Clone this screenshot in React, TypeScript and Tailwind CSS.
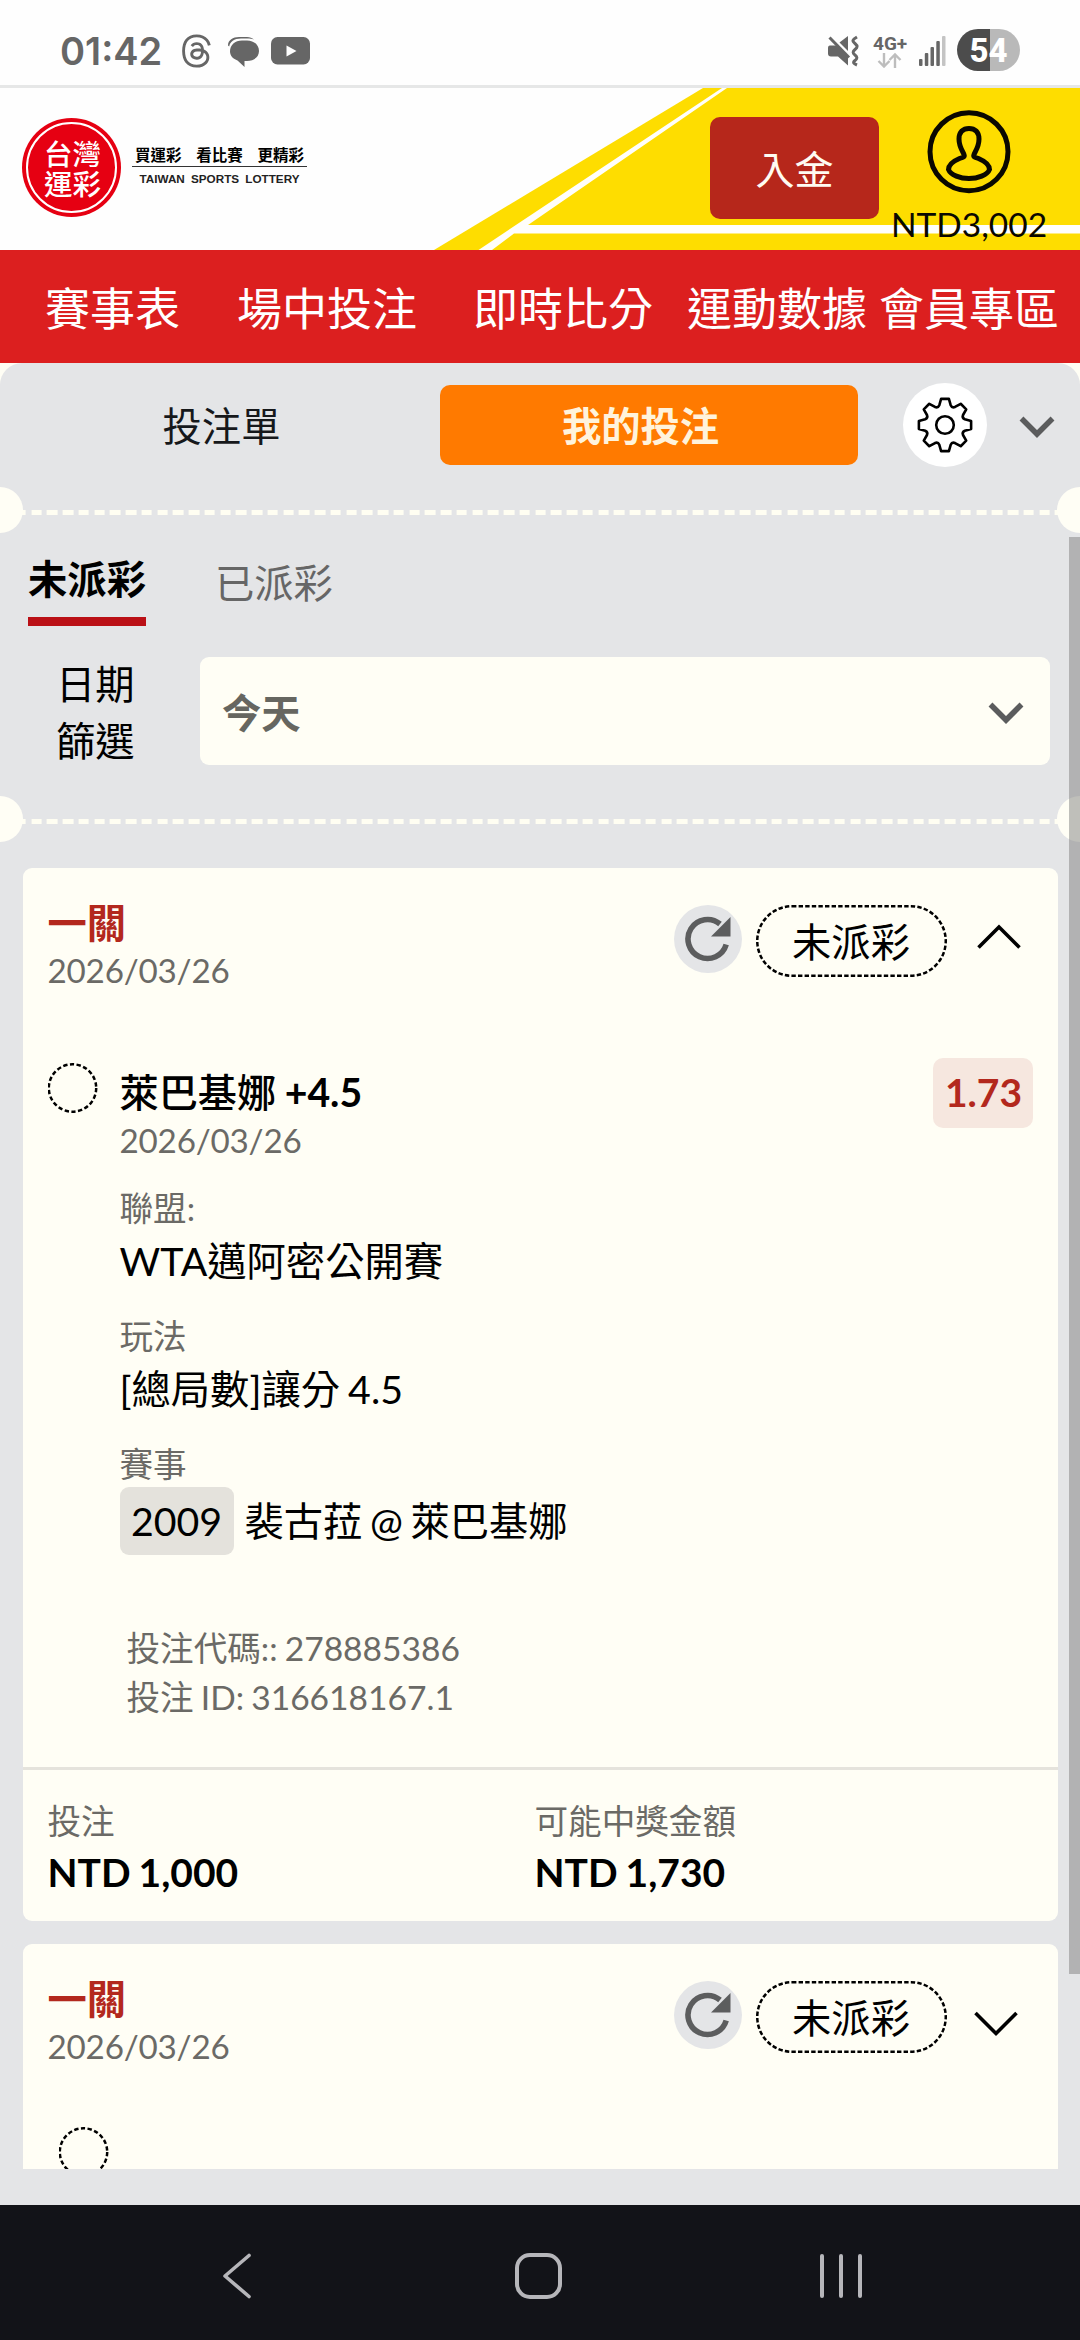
import React from 'react';
import { FaThreads } from 'react-icons/fa6';

interface Bet {
  id: string;
  title: string;
  date: string;
  status: string;
  expanded: boolean;
}

const navItems = [
  { label: '賽事表', gap: 'ml-[45px]' },
  { label: '場中投注', gap: 'ml-[57px]' },
  { label: '即時比分', gap: 'ml-[56px]' },
  { label: '運動數據', gap: 'ml-[34px]' },
  { label: '會員專區', gap: 'ml-[12px]' },
];

const bets: Bet[] = [
  { id: '1', title: '一關', date: '2026/03/26', status: '未派彩', expanded: true },
  { id: '2', title: '一關', date: '2026/03/26', status: '未派彩', expanded: false },
];

// Eight-tooth gear outline around (0, 0)
const gearPath = () => {
  const at = (r: number, deg: number) => {
    const a = (deg * Math.PI) / 180;
    return `${(r * Math.sin(a)).toFixed(2)} ${(-r * Math.cos(a)).toFixed(2)}`;
  };
  let d = '';
  for (let i = 0; i < 8; i++) {
    const a = i * 45;
    d += `${i === 0 ? 'M' : 'L'}${at(26.4, a - 8.5)} L${at(26.4, a + 8.5)} `;
    d += `L${at(20.6, a + 16)} Q${at(18.2, a + 22.5)} ${at(20.6, a + 29)} `;
  }
  return d + 'Z';
};

function StatusBar() {
  return (
    <div className="flex h-[88px] items-start border-b-[3px] border-[#e6e7e7] bg-[#fefefe] text-[#666]">
      <span className="ml-[60px] mt-[27px] w-[121px] font-['Inter',sans-serif] text-[38px] leading-[48px] font-semibold">
        01:42
      </span>
      <FaThreads className="mt-[33px] h-[36px] w-[31px]" />
      <svg className="mt-[36px] ml-[16px] h-[31px] w-[31px]" viewBox="0 0 31 31" fill="currentColor">
        <path d="M0 9.500C0 4 5 1 11 1h8c3 0 5 1 7 2.500C23 2.500 21 2.600 19 2.600h-6C6 2.600 2 6 1.200 10.500z" />
        <path d="M14 4.500h5C26 4.500 31 9 31 15s-5 10-12 10h-2.500L16.500 31 9.500 24.500C5.500 23 2 20 2 15.500 2 9 7 4.500 14 4.500z" />
      </svg>
      <svg className="mt-[37px] ml-[12px] h-[28px] w-[40px]" viewBox="0 0 40 28">
        <rect width="39" height="27.500" rx="6.500" fill="currentColor" />
        <path d="M15.500 8.500 25.500 14l-10 5.500z" fill="#fefefe" />
      </svg>
      <svg className="mt-[35px] ml-[517px] h-[32px] w-[31px]" viewBox="0 0 31 32">
        <path d="M1.500 2.500 21 22.500" stroke="currentColor" strokeWidth="3" />
        <path d="M20 1v15L11.500 7.500z" fill="currentColor" />
        <path d="M2 10.500h6.500L20 22v8.500L10 21.500H3c-2 0-3-1-3-3v-5c0-2 .5-3 2-3z" fill="currentColor" />
        <path d="M29 2c-5 3-5 4-2 6.500s2.500 4 0 6-2.500 3.500 0 5.500 2.500 3.500 0 5.500-1.500 3 2 4.500" fill="none" stroke="currentColor" strokeWidth="3" />
      </svg>
      <div className="mt-[35px] ml-[14px] flex w-[34px] flex-col">
        <span className="font-['Roboto',sans-serif] text-[19px] leading-[17px] font-bold">4G+</span>
        <svg className="ml-[4px] h-[16px] w-[25px]" viewBox="0 0 25 16" fill="none" stroke="#bdbdbd" strokeWidth="2.400">
          <path d="M7 1v13M1.500 9 7 14.500 12.500 9M18 16V3M12.500 8 18 2.500 23.500 8" />
        </svg>
      </div>
      <svg className="mt-[36px] ml-[12px] h-[30px] w-[28px]" viewBox="0 0 28 30" fill="currentColor">
        <rect x="0" y="23" width="3.500" height="7" rx="1" />
        <rect x="5.800" y="17" width="3.500" height="13" rx="1" />
        <rect x="11.500" y="11" width="3.500" height="19" rx="1" />
        <rect x="17.300" y="5" width="3.500" height="25" rx="1" />
        <rect x="23" y="0" width="3.500" height="30" rx="1" fill="#c4c4c4" />
      </svg>
      <div className="mt-[29px] ml-[10px] h-[42px] w-[63px] overflow-hidden rounded-full bg-[linear-gradient(90deg,#4c4c4c_53%,#b9b9b9_53%)] text-center font-['Roboto',sans-serif] text-[33px] leading-[43px] font-extrabold text-white">
        54
      </div>
    </div>
  );
}

function Header() {
  return (
    <div className="relative h-[162px] bg-[#fefefe]">
      <svg className="absolute inset-0 h-[162px] w-[1080px]" viewBox="0 0 1080 162">
        <path d="M434 162 703 0h377v162z" fill="#fedd00" />
        <path d="M478.500 162 722 0h5L528 137h552v8.500H514L492 162z" fill="#fffefb" />
      </svg>
      <div className="relative flex">
        <div className="mt-[30px] ml-[22px] flex h-[99px] w-[99px] rounded-full bg-[#e60012] p-[4px]">
          <div className="grid flex-1 place-content-center rounded-full border-2 border-white pl-[2px] font-['Noto_Sans_CJK_TC',sans-serif] text-[28.500px] leading-[30px] font-medium text-white">
            <span>台灣</span>
            <span>運彩</span>
          </div>
        </div>
        <div className="mt-[54px] ml-[11px] w-[175px]">
          <div className="flex h-[25px] justify-between border-b border-[#333] px-[3px] font-['Noto_Sans_CJK_TC',sans-serif] text-[15.500px] leading-[24px] font-bold text-black">
            <span>買運彩</span>
            <span>看比賽</span>
            <span>更精彩</span>
          </div>
          <div className="mt-[3px] text-center font-['Liberation_Sans',sans-serif] text-[11.700px] leading-[18px] font-bold whitespace-nowrap text-[#222] [word-spacing:3px]">
            TAIWAN SPORTS LOTTERY
          </div>
        </div>
        <button className="mt-[29px] ml-[403px] h-[102px] w-[169px] rounded-[10px] bg-[#b6271b] pt-[2px] text-[39px] text-[#fffbf2]">
          入金
        </button>
        <div className="mt-[22px] ml-[9px] flex w-[162px] flex-col items-center">
          <svg className="h-[84px] w-[84px]" viewBox="928 110 84 84" fill="none" stroke="#0a0800" strokeWidth="5">
            <ellipse cx="970" cy="151.700" rx="39" ry="39" />
            <path d="M963.500 157.500C969 155.500 960 151 960 139c0-7 4-10.500 10-10.500s10 3.500 10 10.500c0 12-9 16.500-3.500 18.500l3 1c7 3 11 6 11 11-2 5.500-12 9-20.500 9s-18.500-3.500-20.500-9c0-5 4-8 11-11z" />
          </svg>
          <span className="mt-[8px] text-[33.500px] leading-[44px] text-[#0a0800]">NTD3,002</span>
        </div>
      </div>
    </div>
  );
}

function Perforation() {
  return (
    <div className="relative h-[46px] w-[1080px] overflow-hidden">
      <div className="mt-[23px] h-[5px] bg-[repeating-linear-gradient(90deg,#fffef2_0_10.400px,transparent_10.400px_15.750px)] bg-[position:15.600px_0]" />
      <div className="absolute top-0 -left-[23px] h-[46px] w-[46px] rounded-full bg-[#fffef5]" />
      <div className="absolute top-0 -right-[23px] h-[46px] w-[46px] rounded-full bg-[#fffef5]" />
    </div>
  );
}

function SmallChevron() {
  return (
    <svg className="h-[22px] w-[36px]" viewBox="0 0 36 22" fill="none" stroke="#5b5c5d" strokeWidth="5.500">
      <path d="M2.500 2.500 18 18 33.500 2.500" />
    </svg>
  );
}

function BetHeader({ bet }: { bet: Bet }) {
  return (
    <div className="flex h-[130px] pl-[25px]">
      <div className="mt-[30px] w-[626px]">
        <div className="text-[39.300px] leading-[50px] font-bold text-[#b3281d]">{bet.title}</div>
        <div className="text-[33.200px] leading-[44px] tracking-[-0.200px] text-[#6b6a66]">{bet.date}</div>
      </div>
      <div className="mt-[37px] grid h-[68px] w-[68px] place-items-center rounded-full bg-[#e4e5e7]">
        <svg className="h-[46px] w-[46px]" viewBox="0 0 46 46">
          <path d="M35 8A19.500 19.500 0 1 0 41.200 28.500" fill="none" stroke="#5c5d5e" strokeWidth="5.600" />
          <path d="M45.500 1v19.500h-19.500z" fill="#5c5d5e" />
        </svg>
      </div>
      <div className="relative mt-[37px] ml-[14px] h-[72px] w-[191px] text-center text-[39.300px] leading-[74px]">
        {bet.status}
        <svg className="absolute inset-0 h-[72px] w-[191px]" viewBox="0 0 191 72">
          <rect x="1.250" y="1.250" width="188.500" height="69.500" rx="34.750" fill="none" stroke="#000" strokeWidth="2.500" strokeDasharray="4.400 2.200" />
        </svg>
      </div>
      {bet.expanded ? (
        <svg className="mt-[56px] ml-[30px] h-[26px] w-[44px]" viewBox="0 0 44 26" fill="none" stroke="#000" strokeWidth="3.600">
          <path d="M1.500 23.500 22 3 42.500 23.500" />
        </svg>
      ) : (
        <svg className="mt-[67px] ml-[27px] h-[26px] w-[44px]" viewBox="0 0 44 26" fill="none" stroke="#000" strokeWidth="3.600">
          <path d="M1.500 2 22 22.500 42.500 2" />
        </svg>
      )}
    </div>
  );
}

function DashedCircle() {
  return (
    <svg className="h-[50px] w-[50px] shrink-0" viewBox="0 0 50 50">
      <circle cx="24.500" cy="25" r="23.700" fill="none" stroke="#000" strokeWidth="2.500" strokeDasharray="4.300 2.470" />
    </svg>
  );
}

function BetDetail() {
  return (
    <>
      <div className="mt-[65px] flex h-[704px] pl-[25px]">
        <DashedCircle />
        <div className="ml-[22px] flex-1">
          <div className="mt-[4px] flex justify-between pr-[25px]">
            <div>
              <div className="text-[39.200px] leading-[50px] font-medium [word-spacing:-1.500px]">
                萊巴基娜 <b>+4.5</b>
              </div>
              <div className="mt-px text-[33.200px] leading-[44px] tracking-[-0.200px] text-[#6b6a66]">2026/03/26</div>
            </div>
            <div className="-mt-[9px] h-[70px] w-[100px] rounded-[10px] bg-[#f6e7df] pl-[2px] text-center text-[39px] leading-[69px] font-bold text-[#b3281d]">
              1.73
            </div>
          </div>
          <div className="mt-[25px] text-[33.600px] leading-[42px] text-[#6b6a66]">聯盟:</div>
          <div className="text-[39.300px] leading-[64px]">WTA邁阿密公開賽</div>
          <div className="mt-[22px] text-[33.600px] leading-[42px] text-[#6b6a66]">玩法</div>
          <div className="text-[39.300px] leading-[64px] [word-spacing:-2px]">[總局數]讓分 4.5</div>
          <div className="mt-[22px] text-[33.600px] leading-[42px] text-[#6b6a66]">賽事</div>
          <div className="mt-[2px] flex text-[39.300px] leading-[68px]">
            <span className="h-[68px] w-[114px] rounded-[9px] bg-[#e4e2dc] text-center">2009</span>
            <span className="ml-[11px] [word-spacing:-2.500px]">裴古菈 @ 萊巴基娜</span>
          </div>
          <div className="mt-[69px] ml-[7px] text-[33.600px] leading-[49px] text-[#6b6a66] [word-spacing:-1.500px]">
            <div>投注代碼:: 278885386</div>
            <div>投注 ID: 316618167.1</div>
          </div>
        </div>
      </div>
      <div className="flex h-[154px] border-t-[3px] border-[#e5e3dc] pt-[29px] pl-[25px]">
        <div className="w-[487px]">
          <div className="text-[33.600px] leading-[44px] text-[#6b6a66]">投注</div>
          <div className="mt-[4px] text-[39px] leading-[51px] font-bold [word-spacing:-1.500px]">NTD 1,000</div>
        </div>
        <div>
          <div className="text-[33.600px] leading-[44px] text-[#6b6a66]">可能中獎金額</div>
          <div className="mt-[4px] text-[39px] leading-[51px] font-bold [word-spacing:-1.500px]">NTD 1,730</div>
        </div>
      </div>
    </>
  );
}

export default function App() {
  return (
    <div className="flex h-[2340px] w-[1080px] flex-col overflow-hidden bg-[#fffef5] font-['Lato','Noto_Sans_CJK_TC',sans-serif] text-black">
      <StatusBar />
      <Header />

      {/* Main navigation */}
      <nav className="flex h-[113px] bg-[#dc1f1f] text-[45px] leading-[119px] whitespace-nowrap text-white">
        {navItems.map((item) => (
          <a key={item.label} className={item.gap}>
            {item.label}
          </a>
        ))}
      </nav>

      <div className="relative h-[1842px] rounded-t-[22px] bg-[#e4e5e7]">
        {/* Bet slip tabs */}
        <div className="flex h-[124px]">
          <div className="mt-[22px] w-[440px] pl-[3px] text-center text-[39.300px] leading-[81px] text-[#16181b]">投注單</div>
          <div className="mt-[22px] h-[80px] w-[418px] rounded-[10px] bg-[#ff7a00] pr-[17px] text-center text-[39.300px] leading-[82px] font-bold text-[#fff3dc]">
            我的投注
          </div>
          <div className="mt-[20px] ml-[45px] grid h-[84px] w-[84px] place-items-center rounded-full bg-white">
            <svg className="h-[58px] w-[58px]" viewBox="-29 -29 58 58" fill="none" stroke="#000" strokeWidth="2.600" strokeLinejoin="round">
              <path d={gearPath()} />
              <circle r="8.800" />
            </svg>
          </div>
          <div className="mt-[53px] ml-[32px]">
            <SmallChevron />
          </div>
        </div>

        <Perforation />

        {/* Payout filter */}
        <div className="flex h-[93px] pl-[28px] text-[39.300px]">
          <div className="h-[93px] w-[118px] border-b-[9px] border-[#ba1016] text-center leading-[91px] font-bold">未派彩</div>
          <div className="ml-[69px] leading-[100px] text-[#666]">已派彩</div>
        </div>
        <div className="mt-[31px] flex h-[108px]">
          <div className="-mt-[2px] ml-[56px] w-[79px] text-[39.300px] leading-[57px]">
            日期
            <br />
            篩選
          </div>
          <div className="ml-[65px] flex w-[850px] justify-between rounded-[9px] bg-[#fffef5] pr-[26px] pl-[22px] text-[39.300px] leading-[111px] font-bold text-[#666660]">
            今天
            <span className="pt-[45px]">
              <SmallChevron />
            </span>
          </div>
        </div>
        <div className="mt-[31px]">
          <Perforation />
        </div>

        {/* Bets */}
        <div className="mx-[22.500px] mt-[26px] flex h-[1301px] flex-col gap-[23px] overflow-hidden">
          {bets.map((bet) => (
            <div key={bet.id} className="shrink-0 rounded-[9px] bg-[#fffef5]">
              <BetHeader bet={bet} />
              {bet.expanded ? (
                <BetDetail />
              ) : (
                <div className="mt-[53px] h-[200px] pl-[36px]">
                  <DashedCircle />
                </div>
              )}
            </div>
          ))}
        </div>

        <div className="absolute top-[174px] right-0 h-[1437px] w-[11px] bg-[#808080]/50" />
      </div>

      {/* System navigation */}
      <div className="flex h-[135px] items-start bg-[#121318] pt-[48px]">
        <svg className="ml-[221px] h-[46px] w-[32px]" viewBox="0 0 32 46" fill="none" stroke="#b6b6ba" strokeWidth="3.600" strokeLinecap="round" strokeLinejoin="round">
          <path d="M28 2.500 4 23l24 20.500" />
        </svg>
        <div className="ml-[262px] h-[46px] w-[47px] rounded-[15px] border-4 border-[#b6b6ba]" />
        <div className="mt-[1px] ml-[258px] flex h-[44px] w-[42px] justify-between">
          <div className="w-[4px] rounded-full bg-[#b6b6ba]" />
          <div className="w-[4px] rounded-full bg-[#b6b6ba]" />
          <div className="w-[4px] rounded-full bg-[#b6b6ba]" />
        </div>
      </div>
    </div>
  );
}
